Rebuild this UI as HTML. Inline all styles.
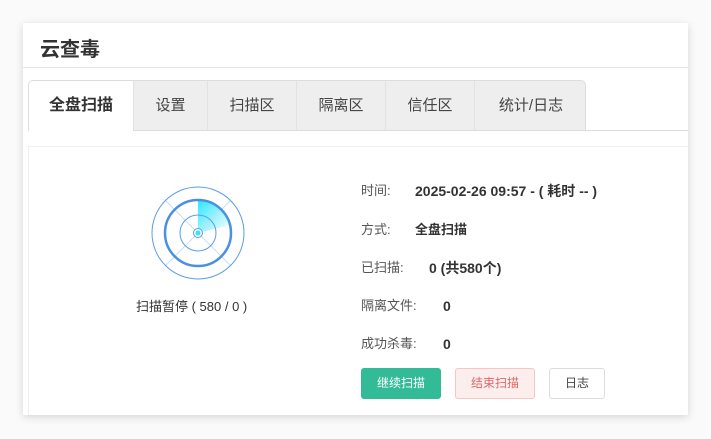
<!DOCTYPE html>
<html><head><meta charset="utf-8"><style>
*{box-sizing:border-box;margin:0;padding:0}
body{width:711px;height:439px;background:#fafafa;font-family:"Liberation Sans","Noto Sans CJK SC",sans-serif;position:relative;overflow:hidden;color:#333}
.card{position:absolute;left:23px;top:23px;width:665px;height:392px;background:#fff;box-shadow:0 2px 8px rgba(0,0,0,.15)}
.hd{height:45px;border-bottom:1px solid #e6e6e6;padding:10px 0 0 17px;font-size:20px;font-weight:bold;color:#333}
.tabs{position:absolute;left:5px;top:57px;width:558px;height:51px;border:1px solid #ddd;border-bottom:none;border-radius:5px 5px 0 0;background:#eee;overflow:hidden}
.tabline{position:absolute;top:107px;height:1px;background:#ddd}
.tab{position:absolute;top:0;height:51px;line-height:50px;text-align:center;font-size:15px;color:#444;border-right:1px solid #e2e2e2}
.tab.a{background:#fff;font-weight:bold;color:#333;font-size:16px;height:52px}
.panel{position:absolute;left:5px;top:123px;width:660px;height:269px;border-top:1px solid #eee;border-left:1px solid #eee}
.lab,.val{position:absolute;line-height:20px}
.lab{left:338px;font-size:13px;color:#555}
.val{font-size:14px;font-weight:bold;color:#333}
.btn{position:absolute;top:345px;height:31px;line-height:29px;text-align:center;font-size:12px;border-radius:3px;border:1px solid}
</style></head><body>
<div class="card">
<div class="hd">云查毒</div>
<div class="tabs">
<div class="tab a" style="left:0;width:105px">全盘扫描</div>
<div class="tab" style="left:105px;width:74px">设置</div>
<div class="tab" style="left:179px;width:89px">扫描区</div>
<div class="tab" style="left:268px;width:89px">隔离区</div>
<div class="tab" style="left:357px;width:89px">信任区</div>
<div class="tab" style="left:446px;width:112px;border:none">统计/日志</div>
</div>
<div class="tabline" style="left:110px;width:555px"></div>
<div class="panel"></div>
<svg style="position:absolute;left:127px;top:162px" width="96" height="96" viewBox="-48 -48 96 96">
<defs><linearGradient id="g" x1="0" y1="0" x2="1" y2="1"><stop offset="0" stop-color="#2ee6ff"/><stop offset="1" stop-color="#fff"/></linearGradient></defs>
<path d="M0 0 L0 -33 A33 33 0 0 1 32 -8 Z" fill="url(#g)"/>
<line x1="-33" y1="-33" x2="33" y2="33" stroke="#c9ddf3" stroke-width="1"/>
<line x1="-33" y1="33" x2="33" y2="-33" stroke="#c9ddf3" stroke-width="1"/>
<circle r="46" fill="none" stroke="#5a9ee6" stroke-width="1"/>
<circle r="33" fill="none" stroke="#4a90e2" stroke-width="2.5"/>
<circle r="18" fill="none" stroke="#5a9ee6" stroke-width="1"/>
<circle r="4.5" fill="#fff" stroke="#5a9ee6" stroke-width="1"/>
<circle r="2.5" fill="#2ee6ff"/>
</svg>
<div style="position:absolute;left:113px;top:273px;font-size:13px;color:#333">扫描暂停 ( 580 / 0 )</div>
<div class="lab" style="top:158px">时间:</div><div class="val" style="left:392px;top:158px">2025-02-26 09:57 - ( 耗时 -- )</div>
<div class="lab" style="top:197px">方式:</div><div class="val" style="left:392px;top:197px;font-size:13px">全盘扫描</div>
<div class="lab" style="top:235px">已扫描:</div><div class="val" style="left:406px;top:235px">0 (共580个)</div>
<div class="lab" style="top:273px">隔离文件:</div><div class="val" style="left:420px;top:273px">0</div>
<div class="lab" style="top:311px">成功杀毒:</div><div class="val" style="left:420px;top:311px">0</div>
<div class="btn" style="left:338px;width:80px;background:#33bb97;border-color:#33bb97;color:#fff">继续扫描</div>
<div class="btn" style="left:432px;width:80px;background:#fdeeee;border-color:#f5c6c6;color:#e06666">结束扫描</div>
<div class="btn" style="left:526px;width:56px;background:#fff;border-color:#ddd;color:#444">日志</div>
</div>
</body></html>
